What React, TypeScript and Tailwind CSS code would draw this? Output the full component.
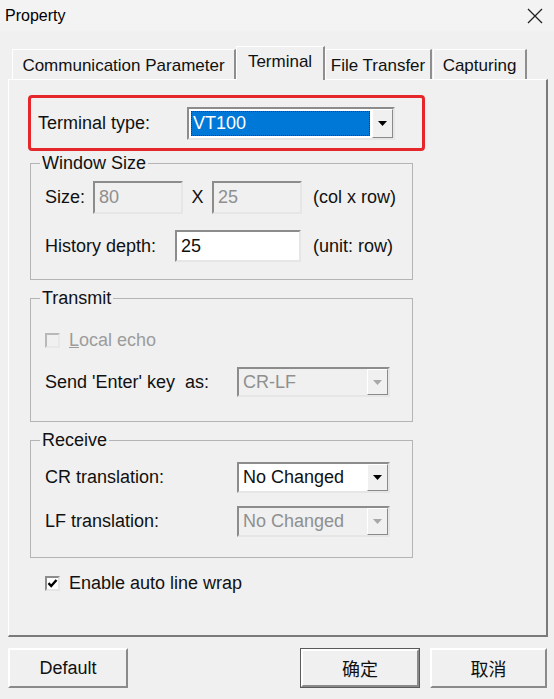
import React from "react";

// Win32-style "Property" dialog, Terminal tab selected.

const FONT = { fontFamily: '"Liberation Sans", Arial, "Noto Sans CJK SC", sans-serif' };
const CJK = { fontFamily: '"Noto Sans CJK SC", "Liberation Sans", sans-serif' };

function Arrow({ disabled }: { disabled?: boolean }) {
  return (
    <svg width="9" height="5" viewBox="0 0 9 5">
      <path d="M0 0 H9 L4.5 5 Z" fill={disabled ? "#a8a8a8" : "#000"} />
    </svg>
  );
}

function Combo({
  value,
  width,
  height,
  disabled,
  selected,
}: {
  value: string;
  width: string;
  height: string;
  disabled?: boolean;
  selected?: boolean;
}) {
  return (
    <div
      className={`${width} ${height} flex border-2 border-t-[#8c8c8c] border-l-[#8c8c8c] border-b-[#e6e6e6] border-r-[#e6e6e6] ${
        disabled ? "bg-[#f0f0f0]" : "bg-white"
      }`}
    >
      <div className="flex-1 flex items-stretch p-[2px] min-w-0">
        {selected ? (
          <div className="flex-1 flex items-center bg-[#0078d7] text-white border border-dotted border-[#333] pl-[1px]">
            {value}
          </div>
        ) : (
          <div className={`flex-1 flex items-center pl-[2px] ${disabled ? "text-[#8f8f8f]" : "text-[#111]"}`}>
            {value}
          </div>
        )}
      </div>
      <div className="w-[21px] flex items-center justify-center bg-[#f0f0f0] border border-t-white border-l-white border-b-[#8a8a8a] border-r-[#8a8a8a]">
        <Arrow disabled={disabled} />
      </div>
    </div>
  );
}

function Edit({ value, width, disabled }: { value: string; width: string; disabled?: boolean }) {
  return (
    <div
      className={`${width} h-full flex items-center pl-[4px] border-2 border-t-[#8c8c8c] border-l-[#8c8c8c] border-b-[#e6e6e6] border-r-[#e6e6e6] ${
        disabled ? "bg-[#f0f0f0] text-[#8f8f8f]" : "bg-white text-[#111]"
      }`}
    >
      {value}
    </div>
  );
}

function Check({ checked, disabled }: { checked?: boolean; disabled?: boolean }) {
  return (
    <div
      className={`w-[15px] h-[15px] flex items-center justify-center border-2 ${
        disabled
          ? "border-t-[#b8b8b8] border-l-[#b8b8b8] border-b-[#e8e8e8] border-r-[#e8e8e8] bg-[#f0f0f0]"
          : "border-t-[#8c8c8c] border-l-[#8c8c8c] border-b-[#e6e6e6] border-r-[#e6e6e6] bg-white"
      }`}
    >
      {checked && (
        <svg width="11" height="11" viewBox="0 0 11 11">
          <path d="M1.5 5.2 L4.2 8 L9.5 2" stroke="#000" strokeWidth="2.4" fill="none" />
        </svg>
      )}
    </div>
  );
}

function Group({ title, className, children }: { title: string; className: string; children: React.ReactNode }) {
  return (
    <fieldset className={`ml-[21px] w-[383px] border border-[#b4b4b4] ${className}`}>
      <legend className="ml-[9px] px-[2px] leading-[22px] text-[#111]">{title}</legend>
      <div className="pl-[14px]">{children}</div>
    </fieldset>
  );
}

function Tab({ label, width, active }: { label: string; width: string; active?: boolean }) {
  return (
    <div
      className={`${width} flex items-center justify-center bg-[#f0f0f0] text-[17px] border-t border-l border-t-white border-l-white border-r-2 border-r-[#8e8e8e] ${
        active ? "h-[34px] relative z-10 -mb-[1px] pb-[4px]" : "h-[30px] pt-[2px]"
      }`}
    >
      {label}
    </div>
  );
}

function WinButton({ label, width, primary, cjk }: { label: string; width: string; primary?: boolean; cjk?: boolean }) {
  return (
    <div className={`${width} h-[40px] ${primary ? "border border-[#5a5a5a]" : ""}`}>
      <div
        className="w-full h-full flex items-center justify-center bg-[#f0f0f0] border-2 border-t-white border-l-white border-b-[#8a8a8a] border-r-[#8a8a8a] text-[#111]"
        style={cjk ? CJK : undefined}
      >
        {label}
      </div>
    </div>
  );
}

export default function App() {
  return (
    <div className="w-[554px] h-[699px] bg-[#f0f0f0] text-[18px] text-[#111] overflow-hidden" style={FONT}>
      {/* title bar */}
      <div className="h-[31px] flex items-center justify-between pl-[5px] pr-[11px] bg-[#f3f3f3] text-[16px] text-black">
        <span>Property</span>
        <svg width="16" height="16" viewBox="0 0 16 16">
          <path d="M1 1 L15 15 M15 1 L1 15" stroke="#222" strokeWidth="1.3" />
        </svg>
      </div>

      {/* tabs */}
      <div className="pt-[14px] pl-[12px] flex items-end h-[48px]">
        <Tab label="Communication Parameter" width="w-[224px]" />
        <Tab label="Terminal" width="w-[89px]" active />
        <Tab label="File Transfer" width="w-[107px]" />
        <div className="w-[1px]" />
        <Tab label="Capturing" width="w-[94px]" />
      </div>

      {/* tab panel */}
      <div className="ml-[8px] w-[540px] h-[558px] border-t border-l border-t-white border-l-white border-r-2 border-b-2 border-r-[#7a7a7a] border-b-[#7a7a7a]">
        <div className="ml-[19px] mt-[15px] w-[397px] h-[56px] border-[3px] border-[#e5272b] rounded-[4px] flex items-center">
          <span className="pl-[7px] w-[156px]">Terminal type:</span>
          <Combo value="VT100" width="w-[208px]" height="h-[33px]" selected />
        </div>

        <Group title="Window Size" className="mt-[1px]">
          <div className="mt-[7px] h-[33px] flex items-center">
            <span className="w-[48px]">Size:</span>
            <Edit value="80" width="w-[90px]" disabled />
            <span className="w-[29px] text-center">X</span>
            <Edit value="25" width="w-[90px]" disabled />
            <span className="ml-[11px]">(col x row)</span>
          </div>
          <div className="mt-[16px] h-[32px] flex items-center">
            <span className="w-[130px]">History depth:</span>
            <Edit value="25" width="w-[126px]" />
            <span className="ml-[12px]">(unit: row)</span>
          </div>
          <div className="h-[17px]" />
        </Group>

        <Group title="Transmit" className="mt-[7px]">
          <div className="mt-[20px] h-[22px] flex items-center">
            <Check disabled />
            <span className="ml-[9px] text-[#9c9c9c]">
              <span className="underline">L</span>ocal echo
            </span>
          </div>
          <div className="mt-[16px] h-[30px] flex items-center">
            <span className="w-[192px]">Send 'Enter' key&nbsp; as:</span>
            <Combo value="CR-LF" width="w-[153px]" height="h-[30px]" disabled />
          </div>
          <div className="h-[24px]" />
        </Group>

        <Group title="Receive" className="mt-[7px]">
          <div className="mt-[11px] h-[31px] flex items-center">
            <span className="w-[192px]">CR translation:</span>
            <Combo value="No Changed" width="w-[153px]" height="h-[31px]" />
          </div>
          <div className="mt-[13px] h-[31px] flex items-center">
            <span className="w-[192px]">LF translation:</span>
            <Combo value="No Changed" width="w-[153px]" height="h-[31px]" disabled />
          </div>
          <div className="h-[20px]" />
        </Group>

        <div className="mt-[14px] ml-[36px] h-[22px] flex items-center">
          <Check checked />
          <span className="ml-[9px]">Enable auto line wrap</span>
        </div>
      </div>

      {/* buttons */}
      <div className="mt-[11px] pl-[8px] pr-[7px] flex justify-between">
        <WinButton label="Default" width="w-[120px]" />
        <div className="flex gap-[10px]">
          <WinButton label="确定" width="w-[120px]" primary cjk />
          <WinButton label="取消" width="w-[117px]" cjk />
        </div>
      </div>
    </div>
  );
}
